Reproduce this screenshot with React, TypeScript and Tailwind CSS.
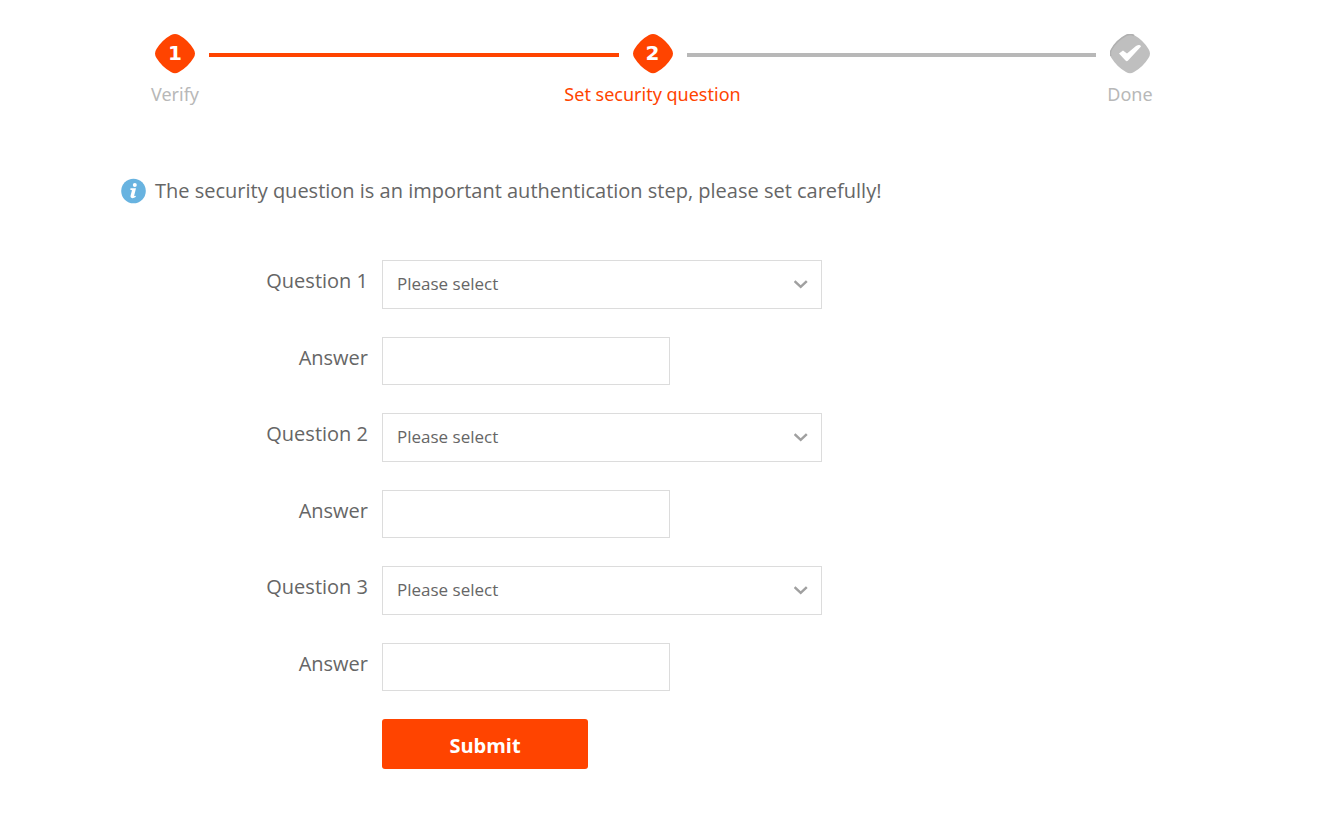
import React from 'react';

interface IStep {
  label: string;
  status: 'complete' | 'current' | 'pending';
}

const steps: IStep[] = [
  { label: 'Verify', status: 'complete' },
  { label: 'Set security question', status: 'current' },
  { label: 'Done', status: 'pending' },
];

const questions = [1, 2, 3];

const StepBadge: React.FC<{ step: IStep; number: number }> = ({
  step,
  number,
}): JSX.Element => {
  const pending = step.status === 'pending';

  return (
    <div className="grid h-10 w-10 place-items-center">
      <svg
        className="col-start-1 row-start-1"
        width="40"
        height="40"
        viewBox="0 0 40 40"
        aria-hidden="true"
      >
        <path
          d="M16 1Q20-1 24 1Q33 6 38.5 15Q41.5 19.5 38.5 24Q33 33 24 38Q20 40.5 16 38Q7 33 1.5 24Q-1.5 19.5 1.5 15Q7 6 16 1Z"
          fill={pending ? '#bfbfbf' : '#ff4400'}
        />
        {pending && (
          <>
            <path
              d="M1 22Q-.5 19 1.5 15.5Q7 6 16 1.5Q20-.5 24 1.5"
              fill="none"
              stroke="#b0b0b0"
              strokeWidth="1.5"
            />
            <path
              d="M9 19.5L13 16.5L17 19.5L26 12Q30 10 31 12.5L19 25.5Q17 28.5 15.5 26.5Z"
              fill="#fff"
            />
          </>
        )}
      </svg>
      {!pending && (
        <span className="col-start-1 row-start-1 pb-0.5 font-['DejaVu_Sans',sans-serif] text-xl font-bold leading-none text-white">
          {number}
        </span>
      )}
    </div>
  );
};

const Steps: React.FC = (): JSX.Element => (
  <ol className="flex items-start pl-[34px] pr-[50px] font-['Noto_Sans',sans-serif]">
    {steps.map((step, index) => (
      <React.Fragment key={step.label}>
        {index > 0 && (
          <li
            aria-hidden="true"
            className={
              step.status === 'pending'
                ? 'mx-3.5 mt-[19px] h-1 flex-1 bg-[#b8b8b8]'
                : 'mx-3.5 mt-[19px] h-1 flex-1 bg-[#ff4400]'
            }
          />
        )}
        <li className="flex w-10 flex-col items-center gap-2">
          <StepBadge step={step} number={index + 1} />
          <span
            className={
              step.status === 'current'
                ? 'whitespace-nowrap text-lg leading-6 text-[#ff4400]'
                : 'whitespace-nowrap text-lg leading-6 text-[#b8b8b8]'
            }
          >
            {step.label}
          </span>
        </li>
      </React.Fragment>
    ))}
  </ol>
);

const QuestionFields: React.FC<{ number: number }> = ({
  number,
}): JSX.Element => (
  <>
    <div className="flex gap-3.5">
      <label
        htmlFor={`question-${number}`}
        className="w-[247px] pt-[7px] text-right text-xl leading-7"
      >
        Question {number}
      </label>
      <div className="grid w-[440px] items-center">
        <select
          id={`question-${number}`}
          className="col-start-1 row-start-1 h-[49px] w-full appearance-none border border-[#dcdcdc] bg-white px-3.5 pb-0.5 text-[17px]"
        >
          <option>Please select</option>
        </select>
        <svg
          className="pointer-events-none col-start-1 row-start-1 mr-3.5 justify-self-end"
          width="14"
          height="9"
          viewBox="0 0 14 9"
          fill="none"
          stroke="#a0a0a0"
          strokeWidth="2.5"
          aria-hidden="true"
        >
          <path d="M.6 1.2L6.7 6.8L12.8 1.2" />
        </svg>
      </div>
    </div>
    <div className="flex gap-3.5">
      <label
        htmlFor={`answer-${number}`}
        className="w-[247px] pt-[7px] text-right text-xl leading-7"
      >
        Answer
      </label>
      <input
        id={`answer-${number}`}
        type="text"
        className="h-12 w-72 border border-[#dcdcdc] px-3.5 text-[17px]"
      />
    </div>
  </>
);

const App: React.FC = (): JSX.Element => {
  return (
    <main className="bg-white px-[121px] pb-14 pt-[34px] font-['Open_Sans',sans-serif] text-[#666]">
      <Steps />

      <p className="mt-[71px] flex items-center gap-2 text-xl leading-7">
        <svg width="26" height="26" viewBox="0 0 26 26" aria-hidden="true">
          <circle cx="12.5" cy="13" r="12.3" fill="#68b3e0" />
          <circle cx="13.8" cy="7" r="2" fill="#fff" />
          <path
            d="M9.5 10.2H15L13.2 17.5Q13.2 18.5 15 17.7L14.6 19Q12.5 20.6 10.6 20Q9 19.4 9.6 17.5L11 12.2L9.2 11.8Z"
            fill="#fff"
          />
        </svg>
        The security question is an important authentication step, please set
        carefully!
      </p>

      <form
        className="mt-[55px] flex flex-col gap-7"
        onSubmit={(event) => event.preventDefault()}
      >
        {questions.map((number) => (
          <QuestionFields key={number} number={number} />
        ))}
        <button
          type="submit"
          className="ml-[261px] h-[50px] w-[206px] rounded-[3px] bg-[#ff4400] pt-1 text-xl font-bold text-white"
        >
          Submit
        </button>
      </form>
    </main>
  );
};

export default App;
